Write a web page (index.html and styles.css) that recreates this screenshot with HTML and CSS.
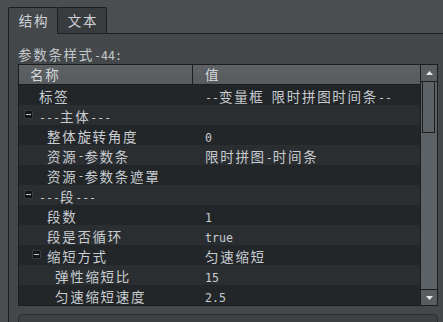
FILE: index.html
```html
<!DOCTYPE html>
<html>
<head>
<meta charset="utf-8">
<link rel="stylesheet" href="styles.css">
</head>
<body>
<div class="tabbar">
  <div class="tab active">结构</div>
  <div class="tab">文本</div>
</div>
<div class="panel">
  <div class="caption">参数条样式<span class="m">-44:</span></div>
  <div class="table">
    <div class="main">
      <div class="head">
        <div class="hc hname">名称</div>
        <div class="hc hval">值</div>
      </div>
      <div class="row odd"><div class="name l0">标签</div><div class="val"><span class="m">--</span>变量框<span class="m"> </span>限时拼图时间条<span class="m">--</span></div></div>
      <div class="row even"><div class="name g0"><span class="exp"></span><span><span class="m">---</span>主体<span class="m">---</span></span></div><div class="val"></div></div>
      <div class="row odd"><div class="name l1">整体旋转角度</div><div class="val"><span class="m">0</span></div></div>
      <div class="row even"><div class="name l1">资源<span class="m">-</span>参数条</div><div class="val">限时拼图<span class="m">-</span>时间条</div></div>
      <div class="row odd"><div class="name l1">资源<span class="m">-</span>参数条遮罩</div><div class="val"></div></div>
      <div class="row even"><div class="name g0"><span class="exp"></span><span><span class="m">---</span>段<span class="m">---</span></span></div><div class="val"></div></div>
      <div class="row odd"><div class="name l1">段数</div><div class="val"><span class="m">1</span></div></div>
      <div class="row even"><div class="name l1">段是否循环</div><div class="val"><span class="m">true</span></div></div>
      <div class="row odd"><div class="name g1"><span class="exp"></span><span>缩短方式</span></div><div class="val">匀速缩短</div></div>
      <div class="row even"><div class="name l2">弹性缩短比</div><div class="val"><span class="m">15</span></div></div>
      <div class="row odd"><div class="name l2">匀速缩短速度</div><div class="val"><span class="m">2.5</span></div></div>
    </div>
    <div class="sbar">
      <div class="sbtn up"><svg width="7" height="4" viewBox="0 0 7 4"><path d="M0 4 L3.5 0 L7 4 Z" fill="#e6e8ea"/></svg></div>
      <div class="track"><div class="thumb"></div></div>
      <div class="sbtn down"><svg width="7" height="4" viewBox="0 0 7 4"><path d="M0 0 L7 0 L3.5 4 Z" fill="#e6e8ea"/></svg></div>
    </div>
  </div>
  <div class="subbox"></div>
</div>
</body>
</html>
```
FILE: styles.css
```css
html, body {
  margin: 0;
  padding: 0;
  background: #4b4e51;
  overflow: hidden;
}
body {
  width: 443px;
  height: 322px;
  font-family: "Noto Sans CJK SC", "DejaVu Sans", sans-serif;
  font-size: 13.5px;
  letter-spacing: 1.7px;
  color: #c8cdd2;
}
.m {
  font-family: "DejaVu Sans Mono", monospace;
  font-size: 11.6px;
  letter-spacing: 0;
}
.tabbar {
  display: flex;
  padding: 7px 0 0 8px;
  height: 26px;
}
.tab {
  box-sizing: border-box;
  height: 26px;
  width: 49px;
  border-top: 1px solid #1c1e20;
  border-right: 1px solid #1c1e20;
  border-radius: 0 2px 0 0;
  background: #393c3f;
  text-align: center;
  line-height: 25px;
  padding-left: 2px;
  color: #cfd3d7;
}
.tab.active {
  position: relative;
  z-index: 1;
  width: 50px;
  height: 27px;
  border-left: 1px solid #1c1e20;
  border-radius: 2px 2px 0 0;
  background: #45484b;
}
.panel {
  margin-left: 8px;
  border-left: 1px solid #1c1e20;
  border-top: 1px solid #1c1e20;
  background: #45484b;
  padding: 0 5px 0 9px;
  height: 288px;
  overflow: hidden;
}
.caption {
  box-sizing: border-box;
  height: 30px;
  padding-top: 11px;
  line-height: 19px;
  color: #c4c8cc;
}
.table {
  display: flex;
  border: 1px solid #1b1d1f;
  height: 240px;
}
.main {
  flex: 1;
  background: #232628;
}
.head {
  display: flex;
  height: 19px;
  border-bottom: 1px solid #1b1d1f;
  background: linear-gradient(#5e6265, #575b5e);
  line-height: 19px;
  color: #d6d9dc;
}
.hc {
  box-sizing: border-box;
  height: 19px;
}
.hname {
  width: 174px;
  padding-left: 11px;
  border-right: 1px solid #1b1d1f;
}
.hval {
  flex: 1;
  padding-left: 12px;
}
.row {
  display: flex;
  height: 20px;
}
.odd { background: #232628; }
.even { background: #2b2e31; }
.name, .val {
  box-sizing: border-box;
  height: 20px;
  padding-top: 2px;
  line-height: 18px;
  white-space: nowrap;
  overflow: hidden;
}
.name {
  width: 174px;
  display: flex;
  align-items: flex-start;
}
.val {
  flex: 1;
  padding-left: 12px;
}
.l0 { padding-left: 20px; }
.l1 { padding-left: 28px; }
.l2 { padding-left: 36px; }
.g0 { padding-left: 5px; }
.g1 { padding-left: 13px; }
.exp {
  box-sizing: border-box;
  flex: none;
  width: 9px;
  height: 9px;
  margin-top: 3px;
  margin-right: 6px;
  border: 1px solid #3a3e41;
  border-radius: 1px;
  background: #131517;
  display: flex;
  align-items: center;
  justify-content: center;
}
.exp::after {
  content: "";
  width: 5px;
  height: 1px;
  background: #c4c8cc;
}
.sbar {
  width: 16px;
  border-left: 1px solid #1b1d1f;
  display: flex;
  flex-direction: column;
  background: #5d6266;
}
.sbtn {
  display: flex;
  align-items: center;
  justify-content: center;
  background: #595d60;
}
.up {
  height: 16px;
  border-bottom: 1px solid #1b1d1f;
}
.down {
  height: 15px;
  border-top: 1px solid #1b1d1f;
}
.track {
  flex: 1;
  padding-left: 1px;
}
.thumb {
  box-sizing: border-box;
  width: 13px;
  height: 51px;
  border: 1px solid #1b1d1f;
  border-top: none;
  background: #5d6266;
}
.subbox {
  margin-top: 8px;
  height: 20px;
  border: 1px solid #2a2c2f;
  border-radius: 4px;
  background: #3e4144;
}
```
